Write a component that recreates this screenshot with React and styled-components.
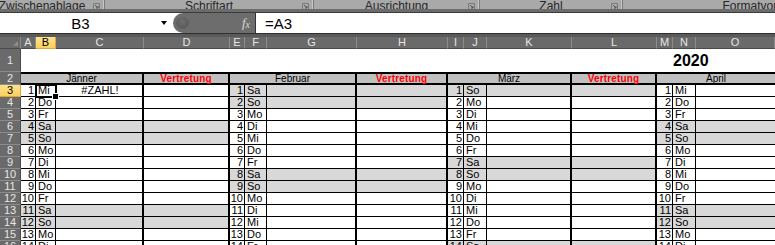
import React from 'react';
import styled, { createGlobalStyle } from 'styled-components';

const GlobalStyle = createGlobalStyle`
  html, body {
    margin: 0;
    padding: 0;
    overflow: hidden;
  }
  body {
    background: #555;
    font-family: 'Liberation Sans', Arial, sans-serif;
  }
`;

// Spaltenbreiten inkl. rechter Linie
const COLUMNS = [
  ['A', 15], ['B', 20], ['C', 88], ['D', 86],
  ['E', 15], ['F', 22], ['G', 90], ['H', 91],
  ['I', 16], ['J', 23], ['K', 85], ['L', 85],
  ['M', 16], ['N', 23], ['O', 0],
];

const WEEKDAYS = ['Mo', 'Di', 'Mi', 'Do', 'Fr', 'Sa', 'So'];

const MONTHS = [
  { name: 'Jänner', first: 2 },
  { name: 'Februar', first: 5 },
  { name: 'März', first: 6 },
  { name: 'April', first: 2, last: true },
];

const DAYS = Array.from({ length: 14 }, (_, i) => i + 1);

const GROUPS = [
  { label: 'Zwischenablage', width: 125, shift: -20 },
  { label: 'Schriftart', width: 209 },
  { label: 'Ausrichtung', width: 166 },
  { label: 'Zahl', width: 143 },
  { label: 'Formatvorlagen', width: 284, noLauncher: true },
];

function Launcher() {
  return (
    <svg width="7" height="7" viewBox="0 0 7 7">
      <path d="M0.5 0.5h6v6h-6z" fill="none" stroke="#7a7a7a" />
      <path d="M2 2l3 3M5 3v2h-2" fill="none" stroke="#555" />
    </svg>
  );
}

function App() {
  return (
    <>
      <GlobalStyle />
      <Window>
        <Ribbon>
          {GROUPS.map((g) => (
            <Group key={g.label} $w={g.width} $shift={g.shift || 0}>
              <span />
              <GroupLabel>{g.label}</GroupLabel>
              <LauncherSlot>{!g.noLauncher && <Launcher />}</LauncherSlot>
            </Group>
          ))}
        </Ribbon>
        <RibbonEdge />

        <FormulaBar>
          <NameBox>
            <NameText>B3</NameText>
            <DropArrow />
          </NameBox>
          <FxPill>
            <Knob />
            <Fx>f<sub>x</sub></Fx>
          </FxPill>
          <FormulaInput>=A3</FormulaInput>
        </FormulaBar>
        <FormulaEdge />

        <Sheet>
          <Corner>
            <SelectAll />
          </Corner>
          {COLUMNS.map(([name]) => (
            <ColHead key={name} $active={name === 'B'}>
              {name}
            </ColHead>
          ))}

          <RowHead>1</RowHead>
          <Blank style={{ gridColumn: '2 / 15' }} />
          <YearCell>2020</YearCell>

          <RowHead>2</RowHead>
          {MONTHS.map((m) => (
            <React.Fragment key={m.name}>
              <TitleCell $span={3} $open={m.last}>
                {m.name}
              </TitleCell>
              {!m.last && <TitleCell $red>Vertretung</TitleCell>}
            </React.Fragment>
          ))}

          {DAYS.map((day) => {
            const row = day + 2;
            return (
              <React.Fragment key={day}>
                <RowHead $active={row === 3}>{row}</RowHead>
                {MONTHS.map((m, mi) => {
                  const wd = (m.first + day - 1) % 7;
                  const weekend = wd >= 5;
                  const selected = mi === 0 && day === 1;
                  return (
                    <React.Fragment key={m.name}>
                      <Cell $weekend={weekend} $align="right">
                        {day}
                      </Cell>
                      <Cell $weekend={weekend} $selected={selected}>
                        {WEEKDAYS[wd]}
                        {selected && <FillHandle />}
                      </Cell>
                      <Cell $weekend={weekend} $align="center" $edge={m.last ? 'open' : 'thick'}>
                        {selected ? '#ZAHL!' : ''}
                      </Cell>
                      {!m.last && <Cell $weekend={weekend} $edge="thick" />}
                    </React.Fragment>
                  );
                })}
              </React.Fragment>
            );
          })}
        </Sheet>
      </Window>
    </>
  );
}

export default App;

const Window = styled.div`
  width: 775px;
  height: 245px;
  display: flex;
  flex-direction: column;
  overflow: hidden;
  background: #555;
`;

const Ribbon = styled.div`
  height: 9px;
  flex: none;
  display: flex;
  overflow: hidden;
  background: #a9a9a9;
`;

const Group = styled.div`
  flex: none;
  box-sizing: border-box;
  width: ${(p) => p.$w}px;
  margin-left: ${(p) => p.$shift}px;
  display: grid;
  grid-template-columns: 1fr auto 1fr;
  align-items: end;
  padding: 0 4px 2px 4px;
  border-right: 1px solid #7c7c7c;
  box-shadow: inset -1px 0 0 #c6c6c6;
`;

const GroupLabel = styled.span`
  font-size: 12px;
  line-height: 12px;
  color: #262626;
  white-space: nowrap;
`;

const LauncherSlot = styled.span`
  justify-self: end;
  display: flex;
  margin-bottom: 2px;
`;

const RibbonEdge = styled.div`
  height: 3px;
  flex: none;
  background: #6c6c6c;
  border-bottom: 1px solid #3b3b3b;
`;

const FormulaBar = styled.div`
  height: 20px;
  flex: none;
  display: flex;
  background: #fff;
`;

const NameBox = styled.div`
  width: 173px;
  flex: none;
  display: flex;
  align-items: center;
`;

const NameText = styled.span`
  flex: 1;
  text-align: center;
  font-size: 15px;
  color: #000;
`;

const DropArrow = styled.span`
  width: 0;
  height: 0;
  margin: 0 6px 0 0;
  border-left: 3.5px solid transparent;
  border-right: 3.5px solid transparent;
  border-top: 4px solid #000;
`;

const FxPill = styled.div`
  width: 82px;
  flex: none;
  display: flex;
  align-items: center;
  justify-content: space-between;
  background: #6d6d6d;
  border-radius: 10px 0 0 10px;
  padding: 0 5px 0 3px;
  box-sizing: border-box;
`;

const Knob = styled.span`
  width: 13px;
  height: 13px;
  border-radius: 50%;
  background: radial-gradient(circle at 50% 35%, #6e6e6e 0%, #585858 70%);
  box-shadow: inset 0 -1px 0 #777;
`;

const Fx = styled.span`
  font-family: 'Liberation Serif', 'Times New Roman', serif;
  font-style: italic;
  font-size: 13px;
  color: #d8d8d8;
  sub {
    font-size: 10px;
    vertical-align: -1px;
  }
`;

const FormulaInput = styled.div`
  flex: 1;
  display: flex;
  align-items: center;
  padding-left: 9px;
  border-left: 1px solid #333;
  font-size: 15px;
  color: #000;
`;

const FormulaEdge = styled.div`
  height: 3px;
  flex: none;
  background: #5a5a5a;
  border-top: 1px solid #2f2f2f;
`;

const Sheet = styled.div`
  flex: none;
  display: grid;
  grid-template-columns: 21px ${COLUMNS.filter(([, w]) => w).map(([, w]) => `${w}px`).join(' ')} 1fr;
  grid-template-rows: 12px 23px 13px repeat(14, 12px);
  background: #fff;
`;

const Corner = styled.div`
  box-sizing: border-box;
  background: #6a6a6a;
  border-right: 1px solid #8c8c8c;
  border-bottom: 1px solid #4a4a4a;
  display: flex;
  align-items: flex-end;
  justify-content: flex-end;
  padding: 0 2px 2px 0;
`;

const SelectAll = styled.span`
  width: 0;
  height: 0;
  border-left: 5px solid transparent;
  border-bottom: 5px solid #8e8e8e;
`;

const ColHead = styled.div`
  box-sizing: border-box;
  background: ${(p) => (p.$active ? 'linear-gradient(#fde38e, #f9cf5e)' : '#6a6a6a')};
  color: ${(p) => (p.$active ? '#000' : '#e6e6e6')};
  border-right: 1px solid ${(p) => (p.$active ? '#e8a23a' : '#8c8c8c')};
  border-bottom: 1px solid ${(p) => (p.$active ? '#e8a23a' : '#4a4a4a')};
  font-size: 11px;
  line-height: 11px;
  display: flex;
  align-items: center;
  justify-content: center;
  overflow: hidden;
`;

const RowHead = styled.div`
  box-sizing: border-box;
  background: ${(p) => (p.$active ? 'linear-gradient(#fde38e, #f9cf5e)' : '#6a6a6a')};
  color: ${(p) => (p.$active ? '#000' : '#e6e6e6')};
  border-right: 1px solid ${(p) => (p.$active ? '#e8a23a' : '#4a4a4a')};
  border-bottom: 1px solid ${(p) => (p.$active ? '#e8a23a' : '#8c8c8c')};
  font-size: 11px;
  line-height: 11px;
  display: flex;
  align-items: center;
  justify-content: center;
`;

const Blank = styled.div`
  background: #fff;
`;

const YearCell = styled.div`
  grid-column: 15 / 17;
  display: flex;
  align-items: flex-end;
  padding: 0 0 3px 0;
  font-size: 16px;
  line-height: 16px;
  font-weight: bold;
  color: #000;
  white-space: nowrap;
`;

const TitleCell = styled.div`
  box-sizing: border-box;
  grid-column: span ${(p) => p.$span || 1};
  background: #c0c0c0;
  border-top: 2px solid #000;
  border-bottom: 2px solid #000;
  border-right: ${(p) => (p.$open ? 'none' : '2px solid #000')};
  display: flex;
  align-items: center;
  justify-content: center;
  font-size: 10px;
  line-height: 10px;
  font-weight: ${(p) => (p.$red ? 'bold' : 'normal')};
  letter-spacing: ${(p) => (p.$red ? '0.15px' : '0')};
  color: ${(p) => (p.$red ? '#ff0000' : '#000')};
  white-space: nowrap;
`;

const Cell = styled.div`
  box-sizing: border-box;
  position: relative;
  background: ${(p) => (p.$weekend ? '#d8d8d8' : '#fff')};
  border-bottom: 1px solid #000;
  border-right: ${(p) => (p.$edge === 'thick' ? '2px solid #000' : p.$edge === 'open' ? 'none' : '1px solid #000')};
  display: flex;
  align-items: center;
  justify-content: ${(p) => (p.$align === 'right' ? 'flex-end' : p.$align === 'center' ? 'center' : 'flex-start')};
  padding: ${(p) => (p.$align === 'right' ? '0 1px 0 0' : '0 0 0 2px')};
  font-size: 11px;
  line-height: 11px;
  color: #000;
  white-space: nowrap;
  ${(p) =>
    p.$selected &&
    `
    outline: 2px solid #000;
    outline-offset: -1px;
    box-shadow: inset 0 0 0 2px #fff;
    z-index: 1;
  `}
`;

const FillHandle = styled.span`
  position: absolute;
  right: -4px;
  bottom: -4px;
  width: 5px;
  height: 5px;
  background: #000;
  border: 1px solid #fff;
`;
